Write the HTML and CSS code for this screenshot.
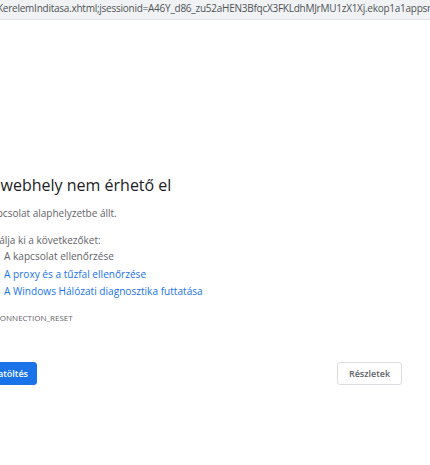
FILE: index.html
```html
<!DOCTYPE html>
<html lang="hu">
<head>
    <meta charset="UTF-8">
    <meta name="viewport" content="width=device-width, initial-scale=1.0">
    <title>Ez a webhely nem érhető el</title>
    <link rel="stylesheet" href="styles.css">
</head>
<body>
    <div id="urlBar">
        <span class="url">KerelemInditasa.xhtml;jsessionid=A46Y_d86_zu52aHEN3BfqcX3FKLdhMJrMU1zX1Xj.ekop1a1appsrv</span>
    </div>
    <div id="mainFrame">
        <div id="content">
            <h1 class="heading">Ez a webhely nem érhető el</h1>
            <p class="summary">A kapcsolat alaphelyzetbe állt.</p>
            <p class="tryText">Próbálja ki a következőket:</p>
            <ul class="suggestions">
                <li>A kapcsolat ellenőrzése</li>
                <li><a href="#">A proxy és a tűzfal ellenőrzése</a></li>
                <li><a href="#">A Windows Hálózati diagnosztika futtatása</a></li>
            </ul>
            <div class="errorCode">ERR_CONNECTION_RESET</div>
        </div>
        <div id="buttonsBox">
            <button class="reloadButton">Újratöltés</button>
            <button class="detailsButton">Részletek</button>
        </div>
    </div>
</body>
</html>
```

FILE: styles.css
```css
body {
    margin: 0;
    width: 430px;
    height: 465px;
    overflow: hidden;
    background-color: #fff;
    font-family: "Open Sans", "Noto Sans", sans-serif;
    color: #5f6368;
}

#urlBar {
    height: 19px;
    background-color: #f1f2f3;
    border-bottom: 1px solid #e3e5e7;
    white-space: nowrap;
    overflow: hidden;
}

.url {
    display: block;
    margin-left: -3px;
    font-size: 10px;
    letter-spacing: -0.25px;
    line-height: 17px;
    color: #4e5257;
}

#mainFrame {
    padding-top: 154px;
}

#content {
    margin-left: -23px;
}

.heading {
    margin: 0 0 0 -10px;
    font-size: 16px;
    font-weight: 400;
    line-height: 22px;
    color: #202124;
}

.summary {
    margin: 10px 0 0;
    font-size: 10px;
    line-height: 14px;
}

.tryText {
    margin: 13px 0 0;
    font-size: 10px;
    line-height: 14px;
}

.suggestions {
    margin: 1px 0 0;
    padding-left: 27px;
    list-style: none;
    font-size: 10.1px;
    line-height: 17.5px;
}

.suggestions a {
    color: #1a73e8;
    text-decoration: none;
}

.errorCode {
    margin-top: 11px;
    font-size: 8px;
    line-height: 11px;
    text-transform: uppercase;
}

#buttonsBox {
    margin: 39px 28px 0 -24px;
    display: flex;
    justify-content: space-between;
}

button {
    height: 23px;
    border-radius: 3px;
    font-family: "Open Sans", sans-serif;
    font-size: 9px;
    font-weight: 600;
    padding: 0;
    cursor: pointer;
}

.reloadButton {
    width: 61px;
    background-color: #1a73e8;
    border: 1px solid #1a73e8;
    color: #fff;
}

.detailsButton {
    width: 65px;
    background-color: #fff;
    border: 1px solid #dadce0;
    color: #5f6368;
}
```
